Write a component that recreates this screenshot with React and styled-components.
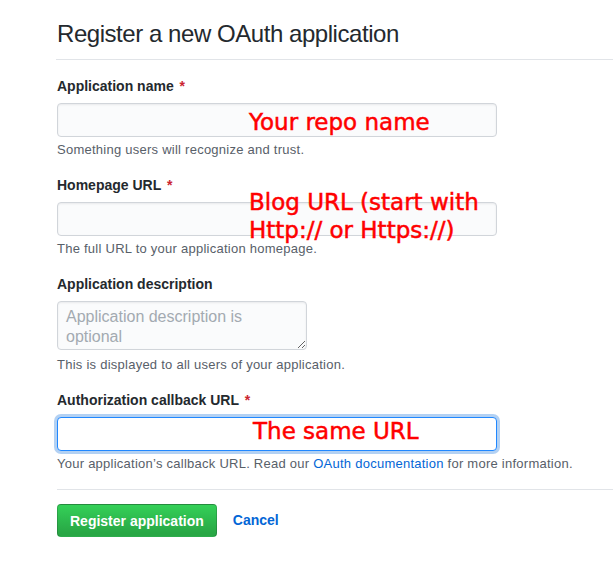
import React from "react";
import styled, { createGlobalStyle } from "styled-components";

const Global = createGlobalStyle`
  html, body { margin: 0; padding: 0; background: #fff; }
  body {
    font-family: "Liberation Sans", Arial, Helvetica, sans-serif;
    color: #24292e;
    font-size: 14px;
    line-height: 1.5;
    overflow: hidden;
  }
`;

const Page = styled.div`
  padding: 16px 0 0 57px;
`;

const Subhead = styled.div`
  border-bottom: 1px solid #e1e4e8;
  padding-bottom: 7px;
  margin-left: -1px;
  padding-left: 1px;
  margin-bottom: 16px;
`;

const Heading = styled.h1`
  margin: 0;
  font-size: 24px;
  font-weight: 400;
  line-height: 36px;
  letter-spacing: -0.45px;
  color: #24292e;
`;

const Form = styled.form`
  display: flex;
  flex-direction: column;
  gap: 16px;
`;

const Group = styled.div`
  display: flex;
  flex-direction: column;
  align-items: flex-start;
`;

const Label = styled.label`
  font-weight: 700;
  font-size: 14px;
  line-height: 21px;
  margin-bottom: 6px;
`;

const Req = styled.span`
  color: #cb2431;
  margin-left: 2px;
`;

const Field = styled.div`
  position: relative;
  width: 440px;
`;

const Input = styled.input`
  box-sizing: border-box;
  display: block;
  width: 100%;
  height: 34px;
  margin: 0;
  padding: 6px 8px;
  font-family: inherit;
  font-size: 14px;
  color: #24292e;
  background: ${(p) => (p.$focus ? "#fff" : "#fafbfc")};
  border: 1px solid ${(p) => (p.$focus ? "#2188ff" : "#d1d5da")};
  border-radius: 4px;
  outline: none;
  box-shadow: ${(p) =>
    p.$focus
      ? "0 0 0 3px rgba(3, 102, 214, 0.3)"
      : "inset 0 1px 2px rgba(27, 31, 35, 0.075)"};
`;

const TextArea = styled.textarea`
  box-sizing: border-box;
  display: block;
  width: 250px;
  height: 49px;
  margin: 0 0 2px;
  padding: 5px 8px;
  font-family: inherit;
  font-size: 16px;
  line-height: 20px;
  color: #24292e;
  background: #fafbfc;
  border: 1px solid #d1d5da;
  border-radius: 4px;
  outline: none;
  resize: both;
  overflow: hidden;
  box-shadow: inset 0 1px 2px rgba(27, 31, 35, 0.075);
  &::placeholder {
    color: #a3aab1;
  }
`;

const Note = styled.p`
  margin: 4px 0 0;
  font-size: 13px;
  line-height: 18px;
  letter-spacing: 0.25px;
  color: #586069;
`;

const Link = styled.a`
  color: #0366d6;
  text-decoration: none;
  font-weight: ${(p) => (p.$bold ? 700 : 400)};
`;

const Annotation = styled.div`
  position: absolute;
  left: ${(p) => p.$left}px;
  top: ${(p) => p.$top}px;
  font-family: "DejaVu Sans", Verdana, sans-serif;
  font-size: 23px;
  line-height: 28px;
  color: #ff0000;
  -webkit-text-stroke: 0.5px #ff0000;
  white-space: nowrap;
  pointer-events: none;
`;

const Divider = styled.hr`
  border: 0;
  border-top: 1px solid #e1e4e8;
  margin: 16px 0 14px;
`;

const Actions = styled.div`
  display: flex;
  align-items: center;
  gap: 16px;
`;

const Button = styled.button`
  box-sizing: border-box;
  height: 33px;
  padding: 0 12px;
  font-family: inherit;
  font-size: 14px;
  font-weight: 700;
  color: #fff;
  background: linear-gradient(-180deg, #34d058 0%, #28a745 90%);
  border: 1px solid rgba(27, 31, 35, 0.2);
  border-radius: 4px;
  cursor: pointer;
`;

export default function App() {
  return (
    <>
      <Global />
      <Page>
        <Subhead>
          <Heading>Register a new OAuth application</Heading>
        </Subhead>
        <Form onSubmit={(e) => e.preventDefault()}>
          <Group>
            <Label>
              Application name <Req>*</Req>
            </Label>
            <Field>
              <Input type="text" />
              <Annotation $left={192} $top={5}>Your repo name</Annotation>
            </Field>
            <Note>Something users will recognize and trust.</Note>
          </Group>
          <Group>
            <Label>
              Homepage URL <Req>*</Req>
            </Label>
            <Field>
              <Input type="text" />
              <Annotation $left={192} $top={-14}>
                Blog URL (start with
                <br />
                Http:// or Https://)
              </Annotation>
            </Field>
            <Note>The full URL to your application homepage.</Note>
          </Group>
          <Group>
            <Label>Application description</Label>
            <TextArea placeholder="Application description is optional" />
            <Note>This is displayed to all users of your application.</Note>
          </Group>
          <Group>
            <Label>
              Authorization callback URL <Req>*</Req>
            </Label>
            <Field>
              <Input type="text" $focus />
              <Annotation $left={196} $top={0}>The same URL</Annotation>
            </Field>
            <Note>
              Your application’s callback URL. Read our{" "}
              <Link href="#">OAuth documentation</Link> for more information.
            </Note>
          </Group>
        </Form>
        <Divider />
        <Actions>
          <Button type="button">Register application</Button>
          <Link href="#" $bold>Cancel</Link>
        </Actions>
      </Page>
    </>
  );
}
